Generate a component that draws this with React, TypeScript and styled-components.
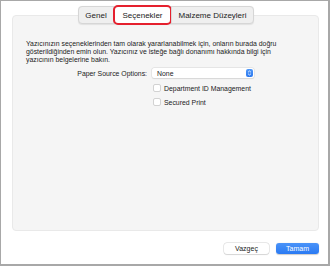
import { createGlobalStyle } from 'styled-components'
import styled from 'styled-components'

const GlobalStyle = createGlobalStyle`
	html, body {
		margin: 0;
		padding: 0;
		background: #ffffff;
	}
	body {
		font-family: 'Liberation Sans', Arial, sans-serif;
		color: #222222;
	}
`
const Window = styled.div`
	box-sizing: border-box;
	width: 330px;
	height: 266px;
	border: 1px solid #a8a8a8;
	border-width: 1px 2px 2px 1px;
	background: #ffffff;
	display: flex;
	flex-direction: column;
	padding: 4px 9px 0 11px;
`
const TabBar = styled.div`
	display: flex;
	justify-content: center;
	position: relative;
	z-index: 1;
	margin-bottom: -9px;
	padding-left: 1px;
`
const Segmented = styled.div`
	display: flex;
	height: 16px;
	margin-top: 1px;
	border: 1px solid #d6d6d6;
	border-radius: 4px;
	background: #efefef;
	box-shadow: 0 0.5px 1px rgba(0, 0, 0, 0.08);
`
const Tab = styled.div<{ w: number; selected?: boolean }>`
	position: relative;
	box-sizing: border-box;
	width: ${(p) => p.w}px;
	display: flex;
	align-items: center;
	justify-content: center;
	font-size: 8px;
	color: #222222;
	background: ${(p) => (p.selected ? '#ffffff' : 'transparent')};
	& + & {
		border-left: 1px solid #d8d8d8;
	}
`
const Highlight = styled.div`
	position: absolute;
	left: -1px;
	right: -1px;
	top: -2px;
	bottom: -2px;
	border: 2px solid #e5202e;
	border-radius: 5px;
`
const Panel = styled.div`
	box-sizing: border-box;
	height: 216px;
	background: #f5f5f5;
	border: 1px solid #e9e9e9;
	border-radius: 4px;
	padding: 24px 14px 0 13px;
`
const Intro = styled.p`
	margin: 0;
	font-size: 6.9px;
	line-height: 7.8px;
	color: #222222;
	width: 270px;
`
const Form = styled.div`
	display: grid;
	grid-template-columns: 121px 102px;
	column-gap: 5px;
	row-gap: 3px;
	margin-top: 5px;
	align-items: center;
`
const Label = styled.div`
	font-size: 6.9px;
	text-align: right;
	color: #222222;
`
const Popup = styled.div`
	box-sizing: border-box;
	height: 10px;
	display: flex;
	align-items: center;
	justify-content: space-between;
	background: #ffffff;
	border-radius: 2px;
	box-shadow: 0 0 0 0.5px #d8d8d8, 0 0.5px 1px rgba(0, 0, 0, 0.12);
	padding: 0 1px 0 5px;
	font-size: 6.9px;
	color: #222222;
`
const Stepper = styled.div`
	width: 7px;
	height: 8px;
	border-radius: 2px;
	background: linear-gradient(#4f97f7, #2b78ef);
	display: flex;
	align-items: center;
	justify-content: center;
`
const CheckRow = styled.label`
	grid-column: 2 / span 1;
	display: flex;
	align-items: center;
	gap: 3px;
	height: 10px;
	font-size: 6.9px;
	color: #222222;
	white-space: nowrap;
	margin-top: 2px;
	&:last-child {
		margin-top: 1px;
	}
`
const Box = styled.span`
	box-sizing: border-box;
	width: 8px;
	height: 8px;
	background: #ffffff;
	border: 1px solid #d2d2d2;
	border-radius: 2px;
	margin-left: 1px;
`
const Footer = styled.div`
	display: flex;
	justify-content: flex-end;
	gap: 7px;
	margin-top: 12px;
`
const Button = styled.div<{ primary?: boolean }>`
	box-sizing: border-box;
	height: 11px;
	width: ${(p) => (p.primary ? 43 : 45)}px;
	border-radius: 3px;
	display: flex;
	align-items: center;
	justify-content: center;
	font-size: 7px;
	color: ${(p) => (p.primary ? '#ffffff' : '#222222')};
	background: ${(p) =>
		p.primary ? 'linear-gradient(#4a93f8, #2a7af3)' : '#ffffff'};
	box-shadow: ${(p) =>
		p.primary
			? '0 0.5px 1px rgba(0, 0, 0, 0.2)'
			: '0 0 0 0.5px #d4d4d4, 0 0.5px 1px rgba(0, 0, 0, 0.15)'};
`

export default function App() {
	return (
		<>
			<GlobalStyle />
			<Window>
				<TabBar>
					<Segmented>
						<Tab w={34}>Genel</Tab>
						<Tab w={58} selected>
							Seçenekler
							<Highlight />
						</Tab>
						<Tab w={82}>Malzeme Düzeyleri</Tab>
					</Segmented>
				</TabBar>
				<Panel>
					<Intro>
						Yazıcınızın seçeneklerinden tam olarak yararlanabilmek için, onların burada doğru
						gösterildiğinden emin olun. Yazıcınız ve isteğe bağlı donanımı hakkında bilgi için
						yazıcının belgelerine bakın.
					</Intro>
					<Form>
						<Label>Paper Source Options:</Label>
						<Popup>
							None
							<Stepper>
								<svg width='5' height='6' viewBox='0 0 5 6'>
									<path d='M1 2.3 L2.5 1 L4 2.3 M1 3.7 L2.5 5 L4 3.7' fill='none' stroke='#fff' strokeWidth='0.8' />
								</svg>
							</Stepper>
						</Popup>
						<CheckRow>
							<Box />
							Department ID Management
						</CheckRow>
						<CheckRow>
							<Box />
							Secured Print
						</CheckRow>
					</Form>
				</Panel>
				<Footer>
					<Button>Vazgeç</Button>
					<Button primary>Tamam</Button>
				</Footer>
			</Window>
		</>
	)
}
